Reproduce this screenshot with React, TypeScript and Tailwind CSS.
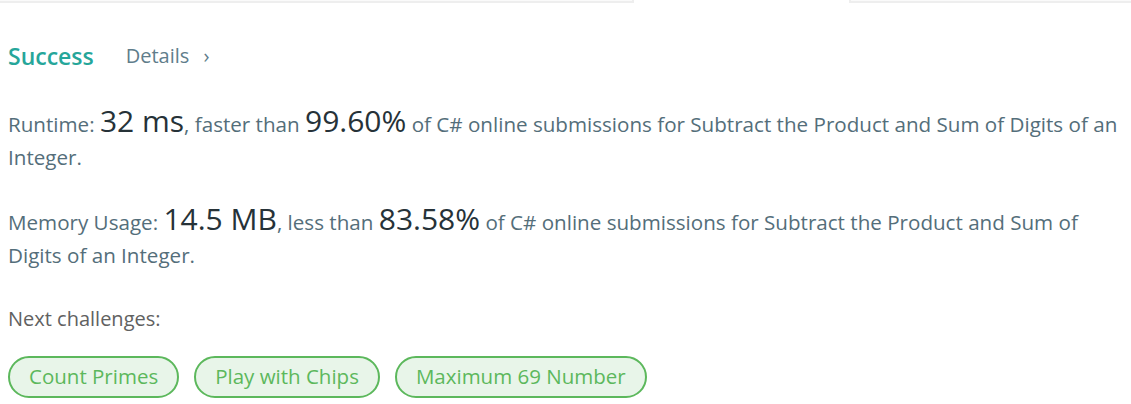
import React from "react";

const font = { fontFamily: '"Open Sans", "Noto Sans", sans-serif' };

function Chip({ label }: { label: string }) {
  return (
    <a className="inline-flex h-[42px] items-center rounded-full border-2 border-[#5cb85c] bg-[#e8f5e9] px-[19px] text-[20.5px] text-[#5cb85c]">
      {label}
    </a>
  );
}

export default function App() {
  return (
    <div className="h-[404px] w-[1131px] overflow-hidden bg-white" style={font}>
      <div className="flex h-[3px]">
        <div className="w-[634px] border-b-2 border-r-2 border-[#eeeeee] bg-[#fafafa]" />
        <div className="w-[215px]" />
        <div className="flex-1 border-b-2 border-l-2 border-[#eeeeee] bg-[#fafafa]" />
      </div>
      <div className="pr-[6px] pl-[8px] pt-[36px]">
        <div className="flex items-center gap-[32px]">
          <span className="text-[23px] font-semibold text-[#26a69a]">Success</span>
          <span className="flex items-center gap-[14px] text-[20px] text-[#607d8b]">
            Details <span className="text-[20px]">›</span>
          </span>
        </div>
        <p className="mt-[32px] text-[20.6px] leading-[33px] text-[#546e7a]">
          Runtime: <span className="text-[30px] leading-none text-[#263238]">32 ms</span>, faster than{" "}
          <span className="text-[30px] leading-none text-[#263238]">99.60%</span> of C# online submissions for Subtract the Product and Sum of Digits of an Integer.
        </p>
        <p className="mt-[30px] text-[20.6px] leading-[33px] text-[#546e7a]">
          Memory Usage: <span className="text-[30px] leading-none text-[#263238]">14.5 MB</span>, less than{" "}
          <span className="text-[30px] leading-none text-[#263238]">83.58%</span> of C# online submissions for Subtract the Product and Sum of Digits of an Integer.
        </p>
        <p className="mt-[30px] text-[20px] leading-[33px] text-[#616161]">Next challenges:</p>
        <div className="mt-[21px] flex gap-[15px]">
          <Chip label="Count Primes" />
          <Chip label="Play with Chips" />
          <Chip label="Maximum 69 Number" />
        </div>
      </div>
    </div>
  );
}
